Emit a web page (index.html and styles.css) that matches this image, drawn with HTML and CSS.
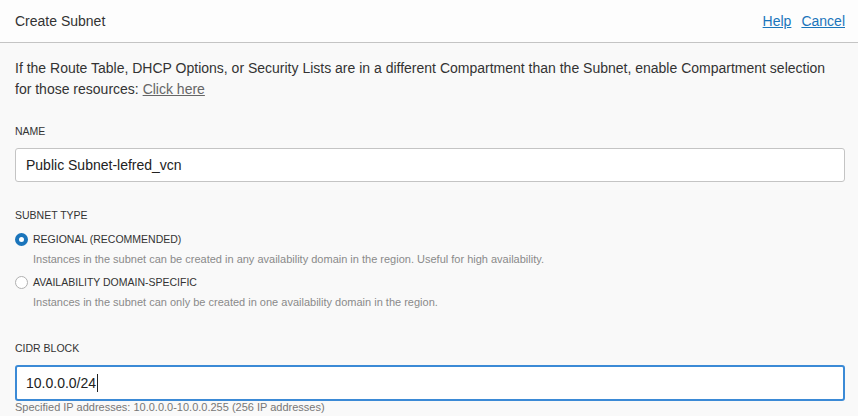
FILE: index.html
```html
<!DOCTYPE html>
<html>
<head>
<meta charset="utf-8">
<link rel="stylesheet" href="styles.css">
</head>
<body>
<div class="header">
  <div class="title">Create Subnet</div>
  <div class="links"><a href="#">Help</a><a href="#">Cancel</a></div>
</div>
<div class="body">
  <p class="intro">If the Route Table, DHCP Options, or Security Lists are in a different Compartment than the Subnet, enable Compartment selection for those resources: <a href="#" class="grey-link">Click here</a></p>
  <div class="field name">
    <div class="label">NAME</div>
    <div class="input">Public Subnet-lefred_vcn</div>
  </div>
  <div class="field type">
    <div class="label">SUBNET TYPE</div>
    <div class="radio-row first">
      <span class="radio checked"></span>
      <span class="radio-label">REGIONAL (RECOMMENDED)</span>
    </div>
    <div class="help">Instances in the subnet can be created in any availability domain in the region. Useful for high availability.</div>
    <div class="radio-row">
      <span class="radio"></span>
      <span class="radio-label">AVAILABILITY DOMAIN-SPECIFIC</span>
    </div>
    <div class="help">Instances in the subnet can only be created in one availability domain in the region.</div>
  </div>
  <div class="field cidr">
    <div class="label">CIDR BLOCK</div>
    <div class="input focused">10.0.0.0/24<span class="caret"></span></div>
    <div class="note">Specified IP addresses: 10.0.0.0-10.0.0.255 (256 IP addresses)</div>
  </div>
</div>
</body>
</html>
```
FILE: styles.css
```css
html, body { margin: 0; padding: 0; }
body {
  font-family: "Liberation Sans", Arial, sans-serif;
  color: #333;
  background: #f9f9f9;
  width: 858px;
  height: 416px;
  overflow: hidden;
}
.header {
  display: flex;
  justify-content: space-between;
  align-items: center;
  height: 43px;
  padding: 0 13px 1px 15px;
  background: #fdfdfd;
  border-bottom: 1px solid #c4c4c4;
  box-sizing: border-box;
  font-size: 14px;
}
.title { color: #333; }
.links { display: flex; gap: 10px; }
.links a { color: #1b75bb; text-decoration: underline; }
.body { padding: 0 13px 0 15px; }
.intro {
  margin: 0;
  padding-top: 15px;
  font-size: 14px;
  line-height: 21px;
  color: #333;
}
.grey-link { color: #666; text-decoration: underline; }
.label {
  font-size: 10.5px;
  color: #333;
  line-height: 12px;
  margin-bottom: 11px;
}
.name { margin-top: 25px; }
.type { margin-top: 27px; }
.cidr { margin-top: 33px; }
.input {
  height: 34px;
  border: 1px solid #c4c4c4;
  border-radius: 3px;
  background: #fff;
  box-sizing: border-box;
  padding: 0 10px;
  font-size: 14px;
  color: #222;
  display: flex;
  align-items: center;
}
.radio-row {
  display: flex;
  align-items: center;
  gap: 5px;
  height: 14px;
  margin-top: 9px;
}
.radio-row.first { margin-top: 7px; }
.radio {
  width: 13px;
  height: 13px;
  border-radius: 50%;
  border: 1px solid #b0b0b0;
  background: #fff;
  box-sizing: border-box;
  flex: none;
}
.radio.checked {
  border: 4px solid #1b75bb;
  background: #fff;
}
.radio-label { font-size: 10.5px; color: #333; }
.help {
  font-size: 11px;
  color: #8a8a8a;
  margin: 7px 0 0 18px;
  line-height: 13px;
}
.input.focused {
  border: 2px solid #3b8ad6;
  padding: 0 9px;
  height: 36px;
}
.caret {
  display: inline-block;
  width: 1px;
  height: 18px;
  background: #222;
  margin-left: 1px;
}
.note {
  font-size: 11px;
  color: #777;
  margin-top: 0;
  line-height: 13px;
}
```
